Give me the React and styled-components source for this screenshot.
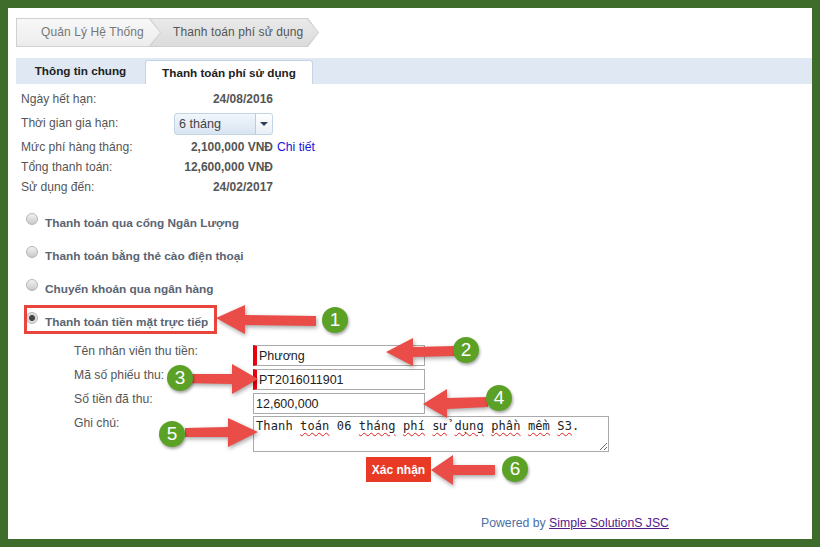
import React from "react";
import styled, { createGlobalStyle } from "styled-components";

const arrows = [
  "M216 318 L245 305 L245 315 L316 316 L316 326 L245 325 L245 334 Z",
  "M386 352 L413 338 L413 347 L455 346 L455 356 L413 357 L413 366 Z",
  "M258 379 L232 364 L232 374 L181 374 L181 383 L232 384 L232 394 Z",
  "M423 404 L447 389 L447 398 L488 397 L488 407 L447 409 L447 418 Z",
  "M258 432 L228 418 L228 427 L185 428 L185 437 L228 437 L228 447 Z",
  "M431 470 L453 455 L453 465 L495 465 L495 475 L453 475 L453 485 Z",
];

const badges = [
  { n: 1, x: 335, y: 320 },
  { n: 2, x: 466, y: 350 },
  { n: 3, x: 180, y: 378 },
  { n: 4, x: 499, y: 398 },
  { n: 5, x: 172, y: 434 },
  { n: 6, x: 515, y: 469 },
];

const methods = [
  "Thanh toán qua cổng Ngân Lượng",
  "Thanh toán bằng thẻ cào điện thoại",
  "Chuyển khoản qua ngân hàng",
  "Thanh toán tiền mặt trực tiếp",
];

export default function App() {
  return (
    <Page>
      <GlobalStyle />
      <Frame>
        <Breadcrumb>
          <Crumb $first>Quản Lý Hệ Thống</Crumb>
          <Crumb>Thanh toán phí sử dụng</Crumb>
        </Breadcrumb>

        <Tabs>
          <Tab>Thông tin chung</Tab>
          <Tab $active>Thanh toán phí sử dụng</Tab>
        </Tabs>

        <Info>
          <InfoRow>
            <span>Ngày hết hạn:</span>
            <InfoValue>24/08/2016</InfoValue>
          </InfoRow>
          <InfoRow $tall>
            <span>Thời gian gia hạn:</span>
            <Select>
              <span>6 tháng</span>
              <SelectButton>
                <Caret />
              </SelectButton>
            </Select>
          </InfoRow>
          <InfoRow>
            <span>Mức phí hàng tháng:</span>
            <InfoValue>
              2,100,000 VNĐ<DetailLink href="#">Chi tiết</DetailLink>
            </InfoValue>
          </InfoRow>
          <InfoRow>
            <span>Tổng thanh toán:</span>
            <InfoValue>12,600,000 VNĐ</InfoValue>
          </InfoRow>
          <InfoRow>
            <span>Sử dụng đến:</span>
            <InfoValue>24/02/2017</InfoValue>
          </InfoRow>
        </Info>

        <Methods>
          {methods.map((m, i) => (
            <Method key={m}>
              <Radio $checked={i === 3} />
              {m}
            </Method>
          ))}
        </Methods>

        <Form>
          <FormLabel>Tên nhân viên thu tiền:</FormLabel>
          <Input $required readOnly value="Phương" />
          <FormLabel>Mã số phiếu thu:</FormLabel>
          <Input $required readOnly value="PT2016011901" />
          <FormLabel>Số tiền đã thu:</FormLabel>
          <Input readOnly value="12,600,000" />
          <FormLabel>Ghi chú:</FormLabel>
          <NoteBox>
            Thanh <Typo>toán</Typo> 06 <Typo>tháng</Typo> <Typo>phí</Typo> <Typo>sử</Typo>{" "}
            <Typo>dụng</Typo> <Typo>phần</Typo> <Typo>mềm</Typo> <Typo>S3</Typo>.
            <Grip viewBox="0 0 8 8">
              <path d="M1 8 L8 1 M5 8 L8 5" stroke="#666" strokeWidth="1" />
            </Grip>
          </NoteBox>
        </Form>

        <Submit>Xác nhận</Submit>

        <Footer>
          Powered by <FooterLink href="#">Simple SolutionS JSC</FooterLink>
        </Footer>
      </Frame>

      <Highlight />
      <ArrowLayer viewBox="0 0 820 547">
        {arrows.map((d) => (
          <path key={d} d={d} fill="#ea4d47" />
        ))}
      </ArrowLayer>
      {badges.map((b) => (
        <Badge key={b.n} $x={b.x} $y={b.y}>
          {b.n}
        </Badge>
      ))}
    </Page>
  );
}

const GlobalStyle = createGlobalStyle`
  html, body {
    margin: 0;
    background: #3f6b2b;
  }
  body {
    font-family: "Liberation Sans", Arial, sans-serif;
    font-size: 12px;
    color: #555;
  }
`;

const Page = styled.div`
  position: relative;
  width: 820px;
  height: 547px;
  overflow: hidden;
`;

const Frame = styled.div`
  box-sizing: border-box;
  width: 820px;
  height: 547px;
  border: 8px solid #3f6b2b;
  background: #fff;
  padding: 10px 0 0 8px;
  display: flex;
  flex-direction: column;
`;

const Breadcrumb = styled.div`
  display: flex;
  height: 29px;
`;

const Crumb = styled.div`
  position: relative;
  z-index: ${(p) => (p.$first ? 2 : 1)};
  box-sizing: border-box;
  height: 29px;
  line-height: 28px;
  width: ${(p) => (p.$first ? "145px" : "169px")};
  margin-left: ${(p) => (p.$first ? "0" : "-11px")};
  padding-left: ${(p) => (p.$first ? "25px" : "23px")};
  letter-spacing: 0.1px;
  color: ${(p) => (p.$first ? "#777" : "#555")};
  background: #d0d0d0;
  clip-path: polygon(0 0, calc(100% - 11px) 0, 100% 50%, calc(100% - 11px) 100%, 0 100%);

  &::before {
    content: "";
    position: absolute;
    z-index: -1;
    inset: 1px;
    background: ${(p) =>
      p.$first
        ? "linear-gradient(#f8f8f8, #ececec)"
        : "linear-gradient(#e9e9e9, #dcdcdc)"};
    clip-path: polygon(0 0, calc(100% - 11px) 0, 100% 50%, calc(100% - 11px) 100%, 0 100%);
  }
`;

const Tabs = styled.div`
  display: flex;
  align-items: flex-end;
  height: 26px;
  margin-top: 11px;
  background: #dfe8f3;
`;

const Tab = styled.div`
  box-sizing: border-box;
  height: ${(p) => (p.$active ? "24px" : "26px")};
  line-height: ${(p) => (p.$active ? "23px" : "26px")};
  width: ${(p) => (p.$active ? "168px" : "129px")};
  text-align: center;
  font-size: 11.7px;
  font-weight: bold;
  color: #222;
  ${(p) =>
    p.$active &&
    `
    background: #fff;
    border: 1px solid #c5d5e6;
    border-bottom: 0;
    border-radius: 3px 3px 0 0;
  `}
`;

const Info = styled.div`
  display: flex;
  flex-direction: column;
  width: 252px;
  margin: 5px 0 0 5px;
`;

const InfoRow = styled.div`
  display: flex;
  align-items: center;
  justify-content: space-between;
  height: ${(p) => (p.$tall ? "28px" : "20px")};
  font-size: 12.1px;
  white-space: nowrap;
`;

const InfoValue = styled.div`
  position: relative;
  font-size: 12px;
  font-weight: bold;
  color: #555;
`;

const Select = styled.div`
  box-sizing: border-box;
  display: flex;
  align-items: center;
  justify-content: space-between;
  width: 99px;
  height: 22px;
  margin-top: 1px;
  padding-left: 4px;
  border: 1px solid #c3d4e6;
  border-radius: 3px;
  background: linear-gradient(#f2f6fb, #d9e4f2);
  font-size: 12.6px;
  color: #444;
`;

const SelectButton = styled.div`
  box-sizing: border-box;
  width: 17px;
  height: 20px;
  display: flex;
  align-items: center;
  justify-content: center;
  border-left: 1px solid #b9cbe0;
  background: linear-gradient(#fff, #e9eff7);
  border-radius: 0 3px 3px 0;
`;

const Caret = styled.i`
  width: 0;
  height: 0;
  border-left: 4px solid transparent;
  border-right: 4px solid transparent;
  border-top: 4px solid #2c4058;
`;

const DetailLink = styled.a`
  position: absolute;
  left: 100%;
  top: 0;
  margin-left: 4px;
  font-size: 12.2px;
  font-weight: normal;
  color: #1a12e0;
  text-decoration: none;
`;

const Methods = styled.div`
  display: flex;
  flex-direction: column;
  margin: 9px 0 0 10px;
`;

const Method = styled.div`
  display: flex;
  align-items: center;
  height: 33px;
  font-size: 11.8px;
  font-weight: bold;
  color: #5a6472;
`;

const Radio = styled.i`
  box-sizing: border-box;
  width: 12px;
  height: 12px;
  margin: -7px 7px 0 0;
  border-radius: 50%;
  border: 1px solid #b5b5b5;
  background: ${(p) =>
    p.$checked
      ? "radial-gradient(circle, #444 0 2.5px, #d8d8d8 3.5px, #f2f2f2)"
      : "linear-gradient(#f2f2f2, #c9c9c9)"};
`;

const Form = styled.div`
  display: grid;
  grid-template-columns: 179px auto;
  justify-content: start;
  row-gap: 3px;
  margin: 7px 0 0 58px;
`;

const FormLabel = styled.div`
  font-size: 12.2px;
  line-height: 13px;
  color: #555;
`;

const Input = styled.input`
  box-sizing: border-box;
  width: 172px;
  height: 21px;
  margin: 0;
  padding: 0 0 0 2px;
  border: 1px solid #aaa;
  border-left: ${(p) => (p.$required ? "4px solid #e8000d" : "1px solid #aaa")};
  outline: none;
  font-family: "Liberation Sans", Arial, sans-serif;
  font-size: 12.5px;
  color: #222;
`;

const NoteBox = styled.div`
  position: relative;
  box-sizing: border-box;
  width: 356px;
  height: 36px;
  margin-top: -1px;
  padding: 2px 0 0 2px;
  border: 1px solid #aaa;
  font-family: "DejaVu Sans Mono", "Liberation Mono", monospace;
  font-size: 12px;
  letter-spacing: 0.12px;
  line-height: 15px;
  color: #222;
  white-space: nowrap;
`;

const Typo = styled.span`
  text-decoration: underline wavy #e02020 1px;
  text-underline-offset: 2px;
`;

const Grip = styled.svg`
  position: absolute;
  right: 1px;
  bottom: 1px;
  width: 8px;
  height: 8px;
`;

const Submit = styled.button`
  align-self: flex-start;
  width: 65px;
  height: 25px;
  margin: 5px 0 0 350px;
  padding: 0;
  border: 0;
  background: #e83a25;
  color: #fff;
  font-family: "Liberation Sans", Arial, sans-serif;
  font-size: 12px;
  font-weight: bold;
`;

const Footer = styled.div`
  align-self: flex-start;
  margin: 34px 0 0 465px;
  font-size: 12.25px;
  color: #4a6fa5;
  white-space: nowrap;
`;

const FooterLink = styled.a`
  color: #551a8b;
`;

const Highlight = styled.div`
  position: absolute;
  left: 24px;
  top: 305px;
  box-sizing: border-box;
  width: 193px;
  height: 29px;
  border: 3px solid #e8453c;
`;

const ArrowLayer = styled.svg`
  position: absolute;
  left: 0;
  top: 0;
  width: 820px;
  height: 547px;
  pointer-events: none;
  filter: drop-shadow(1px 2px 2px rgba(0, 0, 0, 0.35));
`;

const Badge = styled.div`
  position: absolute;
  left: ${(p) => p.$x - 13}px;
  top: ${(p) => p.$y - 13}px;
  width: 26px;
  height: 26px;
  border-radius: 50%;
  background: #5ba126;
  box-shadow: 1px 2px 3px rgba(0, 0, 0, 0.35);
  color: #fff;
  font-size: 19px;
  line-height: 26px;
  text-align: center;
`;
